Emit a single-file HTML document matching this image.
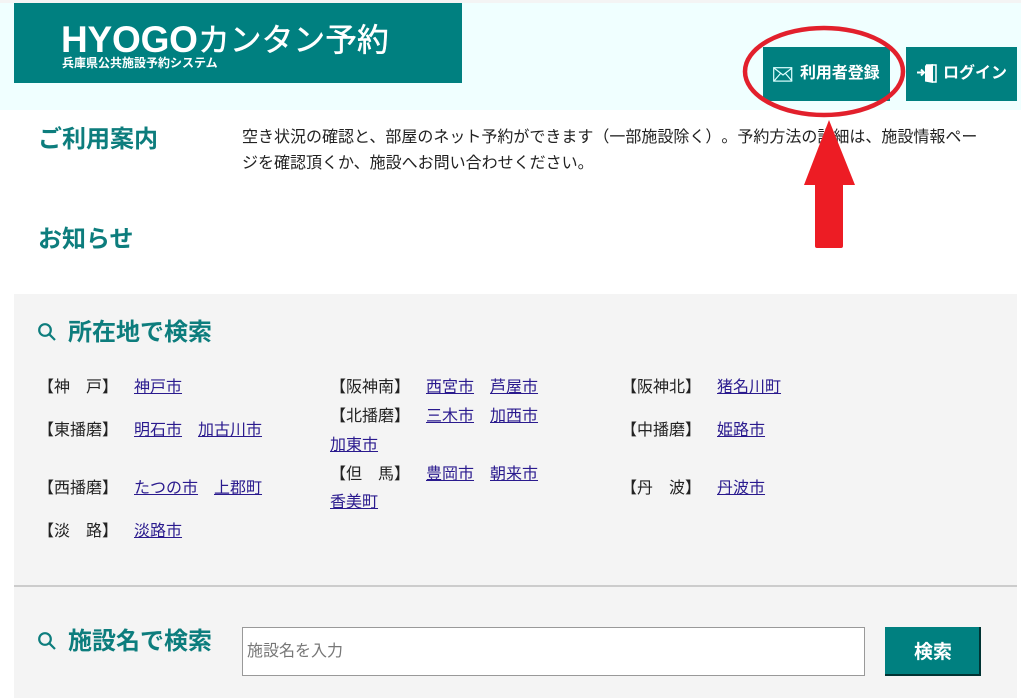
<!DOCTYPE html>
<html lang="ja"><head><meta charset="utf-8"><title>HYOGOカンタン予約</title>
<style>
html,body{margin:0;padding:0;background:#fff}
body{width:1021px;height:698px;position:relative;overflow:hidden;font-family:"Liberation Sans","Noto Sans CJK JP",sans-serif;font-size:16px;color:#222;text-spacing-trim:space-all}
.a{position:absolute;white-space:nowrap;line-height:24px}
a{color:#2a1a8e;text-decoration:underline}
.h{font-weight:700;font-size:24px;color:#0d7d7d;line-height:32px}
.btn{position:absolute;background:#008080;color:#fff;font-weight:700}
</style></head><body>
<div class="a" style="left:0;top:0;width:1021px;height:3px;background:#f4f4f4"></div>
<div class="a" style="left:0;top:3px;width:1021px;height:107px;background:#f0ffff"></div>
<div class="a" style="left:14px;top:3px;width:448px;height:80px;background:#008080"></div>
<div class="a" style="left:61px;top:18px;color:#fff;font-size:37px;line-height:44px;font-weight:700;letter-spacing:-.2px">HYOGO</div>
<div class="a" style="left:198px;top:18px;color:#fff;font-size:31.8px;line-height:44px;-webkit-text-stroke:.5px #fff">カンタン予約</div>
<div class="a" style="left:62px;top:56px;color:#fff;font-size:12px;line-height:14px;font-weight:700">兵庫県公共施設予約システム</div>

<div class="btn" style="left:763px;top:47px;width:127px;height:54px"></div>
<div class="btn" style="left:906px;top:47px;width:111px;height:54px"></div>
<svg class="a" style="left:773px;top:67px" width="20" height="15" viewBox="0 0 20 15" fill="none" stroke="#dff" stroke-width="1.2"><rect x=".7" y=".7" width="18" height="13.4"/><path d="M1 1l9 7 9-7M1 14l6.500-7.500M19 14l-6.500-7.500"/></svg>
<div class="a" style="left:800px;top:62px;color:#fff;font-weight:700;font-size:16px;letter-spacing:-.1px">利用者登録</div>
<svg class="a" style="left:915px;top:62px" width="24" height="23" viewBox="0 0 24 23"><path d="M11 3h10v17h-3" fill="none" stroke="#fff" stroke-width="1.500"/><path d="M10 3.500l8 -1.500V21l-8-1.500z" fill="#fff"/><path d="M2 10.500H9M6 7.500l3 3-3 3" stroke="#fff" stroke-width="2" fill="none"/></svg>
<div class="a" style="left:943px;top:62px;color:#fff;font-weight:700;font-size:16px">ログイン</div>

<div class="a h" style="left:38px;top:124px;">ご利用案内</div>
<div class="a" style="left:242px;top:126px;">空き状況の確認と、部屋のネット予約ができます（一部施設除く）。予約方法の詳細は、施設情報ペー</div>
<div class="a" style="left:242px;top:152px;">ジを確認頂くか、施設へお問い合わせください。</div>
<div class="a h" style="left:38px;top:224px;">お知らせ</div>

<div class="a" style="left:14px;top:294px;width:1003px;height:404px;background:#f4f4f4"></div>
<div class="a" style="left:14px;top:585px;width:1003px;height:2px;background:#ccc"></div>

<svg class="a" style="left:37px;top:322px" width="20" height="20" viewBox="0 0 20 20" fill="none" stroke="#0d7d7d" stroke-width="2.200"><circle cx="8" cy="8" r="5.800"/><path d="M12.200 12.200L18 18"/></svg>
<div class="a h" style="left:68px;top:317px;">所在地で検索</div>

<div class="a" style="left:38px;top:376px;">【神　戸】</div><a class="a" style="left:134px;top:376px;">神戸市</a>
<div class="a" style="left:38px;top:419px;">【東播磨】</div><a class="a" style="left:134px;top:419px;">明石市</a><a class="a" style="left:198px;top:419px;">加古川市</a>
<div class="a" style="left:38px;top:477px;">【西播磨】</div><a class="a" style="left:134px;top:477px;">たつの市</a><a class="a" style="left:214px;top:477px;">上郡町</a>
<div class="a" style="left:38px;top:520px;">【淡　路】</div><a class="a" style="left:134px;top:520px;">淡路市</a>

<div class="a" style="left:330px;top:376px;">【阪神南】</div><a class="a" style="left:426px;top:376px;">西宮市</a><a class="a" style="left:490px;top:376px;">芦屋市</a>
<div class="a" style="left:330px;top:405px;">【北播磨】</div><a class="a" style="left:426px;top:405px;">三木市</a><a class="a" style="left:490px;top:405px;">加西市</a>
<a class="a" style="left:330px;top:434px;">加東市</a>
<div class="a" style="left:330px;top:463px;">【但　馬】</div><a class="a" style="left:426px;top:463px;">豊岡市</a><a class="a" style="left:490px;top:463px;">朝来市</a>
<a class="a" style="left:330px;top:491px;">香美町</a>

<div class="a" style="left:621px;top:376px;">【阪神北】</div><a class="a" style="left:717px;top:376px;">猪名川町</a>
<div class="a" style="left:621px;top:419px;">【中播磨】</div><a class="a" style="left:717px;top:419px;">姫路市</a>
<div class="a" style="left:621px;top:477px;">【丹　波】</div><a class="a" style="left:717px;top:477px;">丹波市</a>

<svg class="a" style="left:37px;top:631px" width="20" height="20" viewBox="0 0 20 20" fill="none" stroke="#0d7d7d" stroke-width="2.200"><circle cx="8" cy="8" r="5.800"/><path d="M12.200 12.200L18 18"/></svg>
<div class="a h" style="left:68px;top:626px;">施設名で検索</div>
<div class="a" style="left:242px;top:627px;width:621px;height:47px;background:#fff;border:1px solid #999"></div>
<div class="a" style="left:247px;top:640px;color:#777">施設名を入力</div>
<div class="a" style="left:885px;top:627px;width:94px;height:47px;background:#008080;border-right:2px solid #033;border-bottom:2px solid #033"></div>
<div class="a" style="left:914px;top:641px;color:#fff;font-weight:700;font-size:19px">検索</div>

<svg class="a" style="left:0;top:0" width="1021" height="698">
<ellipse cx="824" cy="71.500" rx="79" ry="43.500" fill="none" stroke="#e2202c" stroke-width="4.500"/>
<path d="M829 120L855 185H843V246Q843 248 841 248H817Q815 248 815 246V185H804Z" fill="#ed1c24"/>
</svg>
</body></html>
